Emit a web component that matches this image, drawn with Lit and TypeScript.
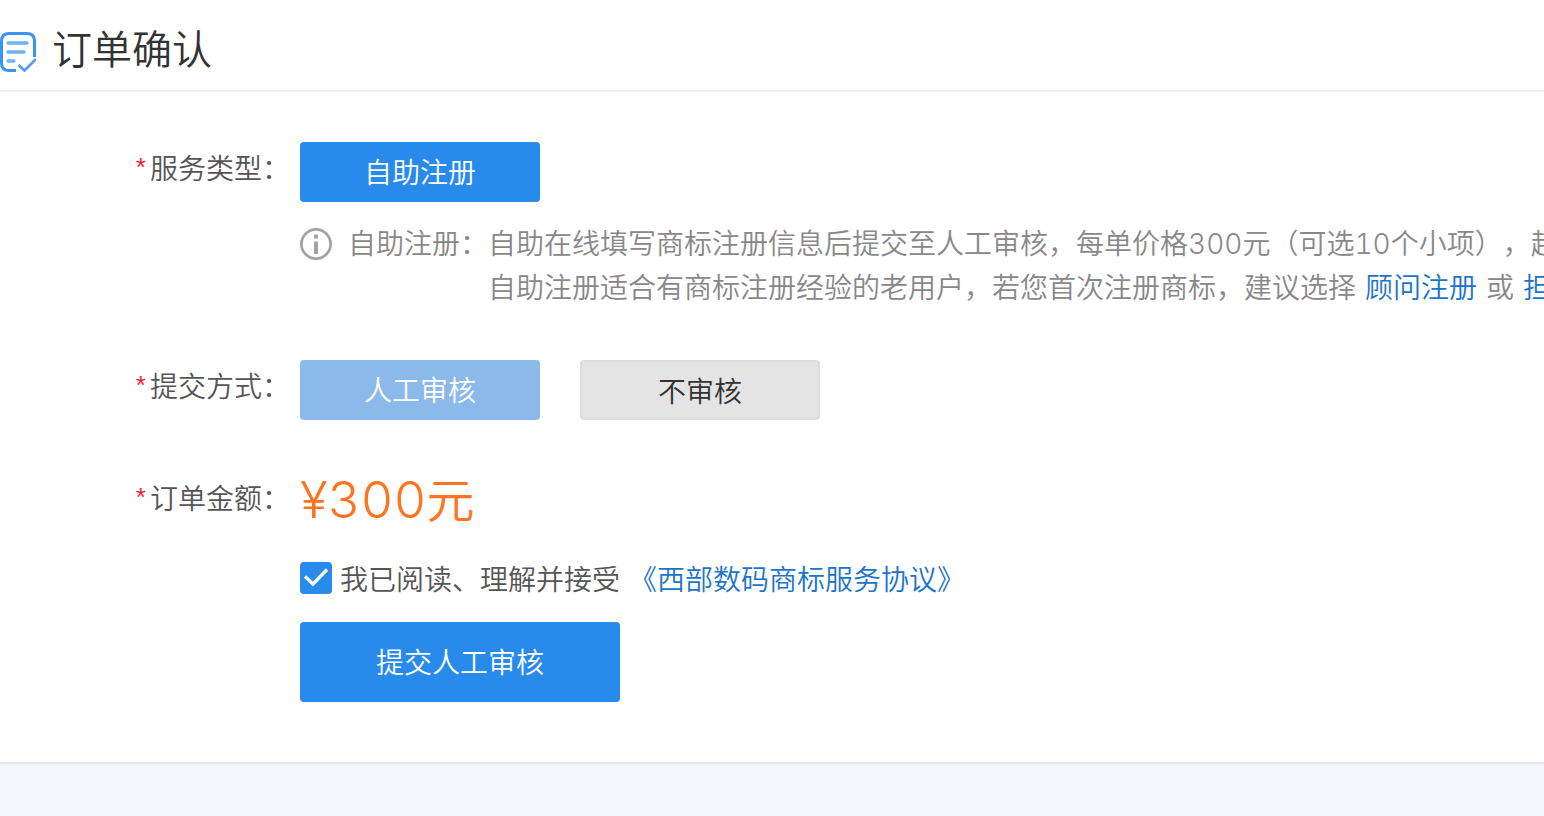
import { LitElement, html, css } from "lit";
import { customElement, state } from "lit/decorators.js";

@customElement("app-root")
export class AppRoot extends LitElement {
  @state() private accepted = true;

  static styles = css`
    :host {
      display: flex;
      flex-direction: column;
      min-height: 100vh;
      overflow: hidden;
      background: #f3f7fb;
      color: #555;
      font-family: "Noto Sans CJK SC", sans-serif;
      font-size: 28px;
      font-weight: 350;
      line-height: 44px;
      text-spacing-trim: space-all;
    }
    * {
      box-sizing: border-box;
    }
    .panel {
      background: #fff;
      border-bottom: 2px solid #e6e6e6;
      padding-bottom: 60px;
    }
    .header {
      display: flex;
      align-items: center;
      gap: 16px;
      height: 92px;
      padding-top: 14px;
      border-bottom: 2px solid #eee;
    }
    .header-icon {
      width: 36px;
      height: 40px;
      flex: none;
    }
    h1 {
      margin: 0;
      padding-bottom: 10px;
      font-size: 40px;
      font-weight: inherit;
      line-height: 48px;
      color: #333;
    }
    .form {
      display: grid;
      grid-template-columns: 290px minmax(0, 1fr);
      column-gap: 10px;
      padding-top: 50px;
    }
    .label {
      display: flex;
      justify-content: flex-end;
      line-height: 50px;
    }
    .star {
      color: #ff1c33;
      margin-right: 4px;
      font-family: "Liberation Sans", sans-serif;
      font-size: 26px;
      font-weight: 400;
    }
    .field {
      padding-bottom: 52px;
    }
    .options {
      display: flex;
      gap: 40px;
    }
    button {
      width: 240px;
      height: 60px;
      padding: 0 0 2px;
      border: 0;
      border-radius: 4px;
      background: #288aeb;
      color: #fff;
      font: inherit;
      cursor: pointer;
    }
    button.chosen {
      background: #8ab9ea;
    }
    button.plain {
      padding: 0;
      border: 2px solid #dcdcdc;
      background: #e4e4e4;
      color: #333;
    }
    button.submit {
      width: 320px;
      height: 80px;
    }
    .note {
      display: flex;
      margin-top: 18px;
      color: #888;
      white-space: nowrap;
    }
    .info {
      width: 32px;
      height: 32px;
      flex: none;
      margin: 8px 16px 0 0;
    }
    .note p {
      margin: 0;
    }
    .note a {
      margin: 0 9px;
    }
    .num {
      font-family: "Inter", sans-serif;
      font-variant-numeric: tabular-nums;
      font-weight: 300;
      line-height: 1;
    }
    a {
      color: #1c74ca;
      text-decoration: none;
    }
    .amount {
      font-size: 48px;
      line-height: 50px;
      color: #ff7321;
    }
    .amount .num {
      font-size: 51px;
    }
    .amount-field {
      padding-bottom: 31px;
    }
    .actions {
      grid-column: 2;
    }
    .agree {
      display: flex;
      align-items: center;
      gap: 9px;
      height: 44px;
      margin-bottom: 22px;
    }
    .agree label {
      display: flex;
      align-items: center;
    }
    .check {
      position: relative;
      display: flex;
      margin-right: 8px;
    }
    .check input {
      appearance: none;
      width: 32px;
      height: 32px;
      margin: 0;
      border: 2px solid #288aeb;
      border-radius: 4px;
      background: #fff;
    }
    .check input:checked {
      background: #288aeb;
    }
    .check svg {
      position: absolute;
      inset: 0;
      pointer-events: none;
    }
  `;

  private toggle(e: Event) {
    this.accepted = (e.target as HTMLInputElement).checked;
  }

  render() {
    return html`
      <main class="panel" lang="zh-CN">
        <header class="header">
          <svg class="header-icon" viewBox="0 0 36 40" fill="none" stroke="#3a94f0" stroke-width="3" aria-hidden="true">
            <path d="M34.500 25V9Q34.500 1.500 27 1.500H9Q1.500 1.500 1.500 9V31Q1.500 38.500 9 38.500H16" />
            <path d="M8 11H27M8 20H24M8 29H14" stroke-width="3.400" stroke="#6fb2f5" stroke-linecap="round" />
            <path d="M18.500 33L24.500 38.500L36 27" stroke-width="2.800" stroke="#559ff0" />
          </svg>
          <h1>订单确认</h1>
        </header>
        <div class="form">
          <div class="label"><span class="star">*</span>服务类型：</div>
          <div class="field">
            <div class="options"><button type="button">自助注册</button></div>
            <div class="note">
              <svg class="info" viewBox="0 0 32 32" fill="none" stroke="#a3a3a3" aria-hidden="true">
                <circle cx="16" cy="16" r="14.600" stroke-width="2.800" />
                <path d="M16 13.500V26" stroke-width="4" />
                <path d="M16 6.500V10.500" stroke-width="4" />
              </svg>
              <p>自助注册：</p>
              <p>
                自助在线填写商标注册信息后提交至人工审核，每单价格<span class="num">300</span>元（可选<span class="num">10</span>个小项），超出另计<br />自助注册适合有商标注册经验的老用户，若您首次注册商标，建议选择<a href="#adviser">顾问注册</a>或<a href="#guarantee">担保注册</a>
              </p>
            </div>
          </div>

          <div class="label"><span class="star">*</span>提交方式：</div>
          <div class="field">
            <div class="options">
              <button type="button" class="chosen">人工审核</button>
              <button type="button" class="plain">不审核</button>
            </div>
          </div>

          <div class="label"><span class="star">*</span>订单金额：</div>
          <div class="amount-field">
            <div class="amount"><span class="num">¥300</span>元</div>
          </div>

          <div class="actions">
            <div class="agree">
              <label>
                <span class="check">
                  <input type="checkbox" .checked=${this.accepted} @change=${this.toggle} />
                  <svg viewBox="0 0 32 32" fill="none" stroke="#f4f9ff" stroke-width="3.400" aria-hidden="true">
                    <path d="M5 14.500L13 22L27 7.500" />
                  </svg>
                </span>
                我已阅读、理解并接受
              </label>
              <a href="#agreement">《西部数码商标服务协议》</a>
            </div>
            <button type="submit" class="submit">提交人工审核</button>
          </div>
        </div>
      </main>
    `;
  }
}
